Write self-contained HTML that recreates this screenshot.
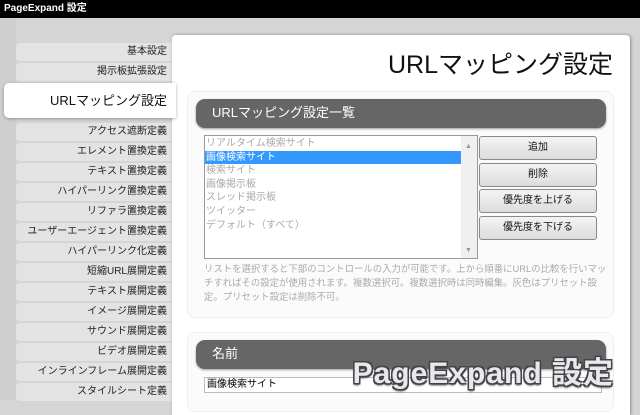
<!DOCTYPE html>
<html><head><meta charset="utf-8"><style>
*{margin:0;padding:0;box-sizing:border-box}
body{width:640px;height:400px;overflow:hidden;background:#d5d5d5;font-family:"Liberation Sans","Noto Sans CJK JP",sans-serif;position:relative}
.top{position:absolute;left:0;top:0;width:640px;height:18px;background:#000;color:#fff;font-size:10px;font-weight:bold;line-height:18px;padding-left:4px}
.strip{position:absolute;left:0;top:18px;width:16px;height:382px;background:#cfcfcf}
.nav{position:absolute;left:16px;width:160px;height:18px;background:#e3e3e3;border-radius:4px 0 0 4px;font-size:10px;color:#222;text-align:right;padding-right:9px;line-height:18px}
.act{position:absolute;left:4px;top:83px;width:172px;height:35px;background:#fff;border-radius:5px 0 0 5px;font-size:13px;color:#111;text-align:right;padding-right:9px;line-height:35px;box-shadow:0 1px 3px rgba(0,0,0,.3)}
.panel{position:absolute;left:172px;top:35px;width:458px;height:380px;background:#fff;border-radius:4px 4px 0 0;box-shadow:1px 0 3px rgba(0,0,0,.35)}
.title{position:absolute;right:27px;top:45px;font-size:25px;color:#111}
.box{position:absolute;left:187px;width:427px;background:#fbfbfb;border:1px solid #eee;border-radius:8px}
.hd{position:absolute;left:196px;width:410px;height:29px;background:#666;border-radius:9px;color:#fff;font-size:13px;line-height:28px;padding-left:16px;box-shadow:0 1px 2px rgba(0,0,0,.4)}
.list{position:absolute;left:204px;top:135px;width:274px;height:124px;border:1px solid #999;background:#fff;font-size:10px;color:#aaa;line-height:13.6px;padding-top:1px}
.it{padding-left:1px;width:256px}
.list .sel{background:#3399ff;color:#fff}
.sb{position:absolute;right:0;top:0;width:16px;height:122px;background:#f0f0f0;color:#999;font-size:7px;text-align:center}
.btn{position:absolute;left:479px;width:118px;height:24px;border:1px solid #888;border-radius:3px;background:linear-gradient(#f4f4f4,#dcdcdc);font-size:10px;text-align:center;line-height:22px;color:#111}
.help{position:absolute;left:204px;top:262px;width:404px;font-size:9.4px;color:#aaa;line-height:14px}
.inp{position:absolute;left:204px;top:377px;width:398px;height:16px;border:1px solid #bbb;background:#fff;font-size:10px;line-height:14px;padding-left:2px;color:#000}
.ov{position:absolute;right:26px;top:348px;font-size:30px;font-weight:bold;color:#e8e8ee;letter-spacing:1px;text-shadow:-1.5px -1.5px 0 #444,1.5px -1.5px 0 #444,-1.5px 1.5px 0 #444,1.5px 1.5px 0 #444,0 2px 2px #222}
</style></head><body>
<div class="top">PageExpand 設定</div>
<div class="strip"></div>
<div class="nav" style="top:43px">基本設定</div>
<div class="nav" style="top:63px">掲示板拡張設定</div>
<div class="nav" style="top:123px">アクセス遮断定義</div>
<div class="nav" style="top:143px">エレメント置換定義</div>
<div class="nav" style="top:163px">テキスト置換定義</div>
<div class="nav" style="top:183px">ハイパーリンク置換定義</div>
<div class="nav" style="top:203px">リファラ置換定義</div>
<div class="nav" style="top:223px">ユーザーエージェント置換定義</div>
<div class="nav" style="top:243px">ハイパーリンク化定義</div>
<div class="nav" style="top:263px">短縮URL展開定義</div>
<div class="nav" style="top:283px">テキスト展開定義</div>
<div class="nav" style="top:303px">イメージ展開定義</div>
<div class="nav" style="top:323px">サウンド展開定義</div>
<div class="nav" style="top:343px">ビデオ展開定義</div>
<div class="nav" style="top:363px">インラインフレーム展開定義</div>
<div class="nav" style="top:383px">スタイルシート定義</div>
<div class="panel"></div>
<div class="act">URLマッピング設定</div>
<div class="title">URLマッピング設定</div>
<div class="box" style="top:91px;height:227px"></div>
<div class="hd" style="top:99px">URLマッピング設定一覧</div>
<div class="list">
<div class="it">リアルタイム検索サイト</div><div class="it sel">画像検索サイト</div><div class="it">検索サイト</div><div class="it">画像掲示板</div><div class="it">スレッド掲示板</div><div class="it">ツイッター</div><div class="it">デフォルト（すべて）</div>
<div class="sb"><span style="position:absolute;left:4px;top:4px">▲</span><span style="position:absolute;left:4px;top:108px">▼</span></div>
</div>
<div class="btn" style="top:136px">追加</div>
<div class="btn" style="top:163px">削除</div>
<div class="btn" style="top:189px">優先度を上げる</div>
<div class="btn" style="top:216px">優先度を下げる</div>
<div class="help">リストを選択すると下部のコントロールの入力が可能です。上から順番にURLの比較を行いマッチすればその設定が使用されます。複数選択可。複数選択時は同時編集。灰色はプリセット設定。プリセット設定は削除不可。</div>
<div class="box" style="top:332px;height:80px"></div>
<div class="hd" style="top:340px">名前</div>
<div class="inp">画像検索サイト</div>
<div class="ov">PageExpand 設定</div>
</body></html>
